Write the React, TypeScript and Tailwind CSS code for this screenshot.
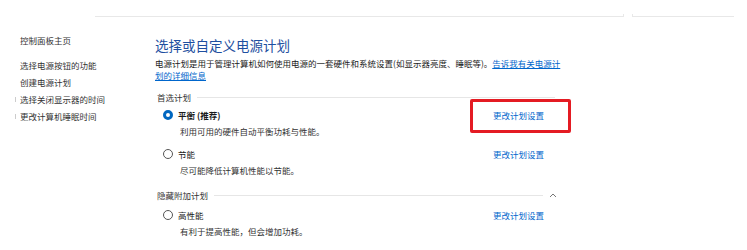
const navItems = ["选择电源按钮的功能", "创建电源计划", "选择关闭显示器的时间", "更改计算机睡眠时间"]

const Radio = ({ checked }: { checked?: boolean }) =>
  checked ? (
    <span className="block w-[10px] h-[10px] rounded-full border-[3px] border-[#0067c0] bg-white" />
  ) : (
    <span className="block w-[10px] h-[10px] rounded-full border border-[#555]" />
  )

const Plan = ({
  name,
  desc,
  checked,
  highlight,
  className,
}: {
  name: React.ReactNode
  desc: string
  checked?: boolean
  highlight?: boolean
  className?: string
}) => (
  <div className={className}>
    <div className="flex items-center h-[14px]">
      <div className="flex items-center w-[338px] pl-[8px] gap-[5px]">
        <Radio checked={checked} />
        <span className={`text-[#1a1a1a] ${checked ? "font-bold" : ""}`}>{name}</span>
      </div>
      <div className="relative">
        <a className="text-[#0066cc]">更改计划设置</a>
        {highlight && (
          <span className="absolute left-[-23px] top-[-10px] w-[101px] h-[34px] border-[3px] border-[#e41b23] rounded-[2px]" />
        )}
      </div>
    </div>
    <div className="h-[14px] mt-[2px] pl-[25px] flex items-center text-[#333]">{desc}</div>
  </div>
)

const SectionHeader = ({ title, width, chevron }: { title: string; width: string; chevron?: boolean }) => (
  <div className="flex items-center h-[14px]">
    <div className={`flex items-center ${width}`}>
      <span className="pl-[2px] pr-[6px] text-[#333]">{title}</span>
      <div className="flex-1 h-px bg-[#e6e6e6]" />
    </div>
    {chevron && (
      <svg className="ml-[6px]" width="8" height="6" viewBox="0 0 8 6" fill="none">
        <path d="M1 5 L4 2 L7 5" stroke="#777" strokeWidth="1" />
      </svg>
    )}
  </div>
)

const App = (): JSX.Element => {
  return (
    <div className="w-[747px] h-[250px] bg-white overflow-hidden font-['Noto_Sans_CJK_SC','Microsoft_YaHei',sans-serif] text-[8.5px] leading-[12px]">
      {/* address bar edge */}
      <div className="flex pt-[16px] pl-[95px]">
        <div className="w-[528px] h-px bg-[#e8e8e8]" />
        <div className="w-px h-[3px] -mt-[2px] bg-[#e8e8e8]" />
        <div className="w-[8px]" />
        <div className="w-px h-[3px] -mt-[2px] bg-[#e8e8e8]" />
        <div className="w-[101px] h-px bg-[#e8e8e8]" />
      </div>

      <div className="flex">
        {/* NAV */}
        <aside className="w-[155px] pl-[20px] pt-[15px] text-[#333] leading-[17px]">
          <div>控制面板主页</div>
          <div className="mt-[8px]">
            {navItems.map((item, i) => (
              <div key={item} className="relative">
                {i > 1 && <span className="absolute left-[-5px] top-[6px] w-px h-[5px] bg-[#ccc]" />}
                {item}
              </div>
            ))}
          </div>
        </aside>

        {/* CONTENT */}
        <main className="flex-1">
          <h1 className="mt-[19px] h-[18px] leading-[18px] text-[13.5px] text-[#1e4fa0]">选择或自定义电源计划</h1>
          <p className="mt-[3px] text-[#1a1a1a]">
            电源计划是用于管理计算机如何使用电源的一套硬件和系统设置(如显示器亮度、睡眠等)。
            <a className="text-[#0066cc] underline">
              告诉我有关电源计
              <br />
              划的详细信息
            </a>
          </p>

          <div className="mt-[9px]">
            <SectionHeader title="首选计划" width="w-[400px]" />
          </div>
          <Plan name="平衡 (推荐)" desc="利用可用的硬件自动平衡功耗与性能。" checked highlight className="mt-[4px]" />
          <Plan name="节能" desc="尽可能降低计算机性能以节能。" className="mt-[9px]" />
          <div className="mt-[11px]">
            <SectionHeader title="隐藏附加计划" width="w-[388px]" chevron />
          </div>
          <Plan name="高性能" desc="有利于提高性能，但会增加功耗。" className="mt-[6px]" />
        </main>
      </div>
    </div>
  )
}

export default App
